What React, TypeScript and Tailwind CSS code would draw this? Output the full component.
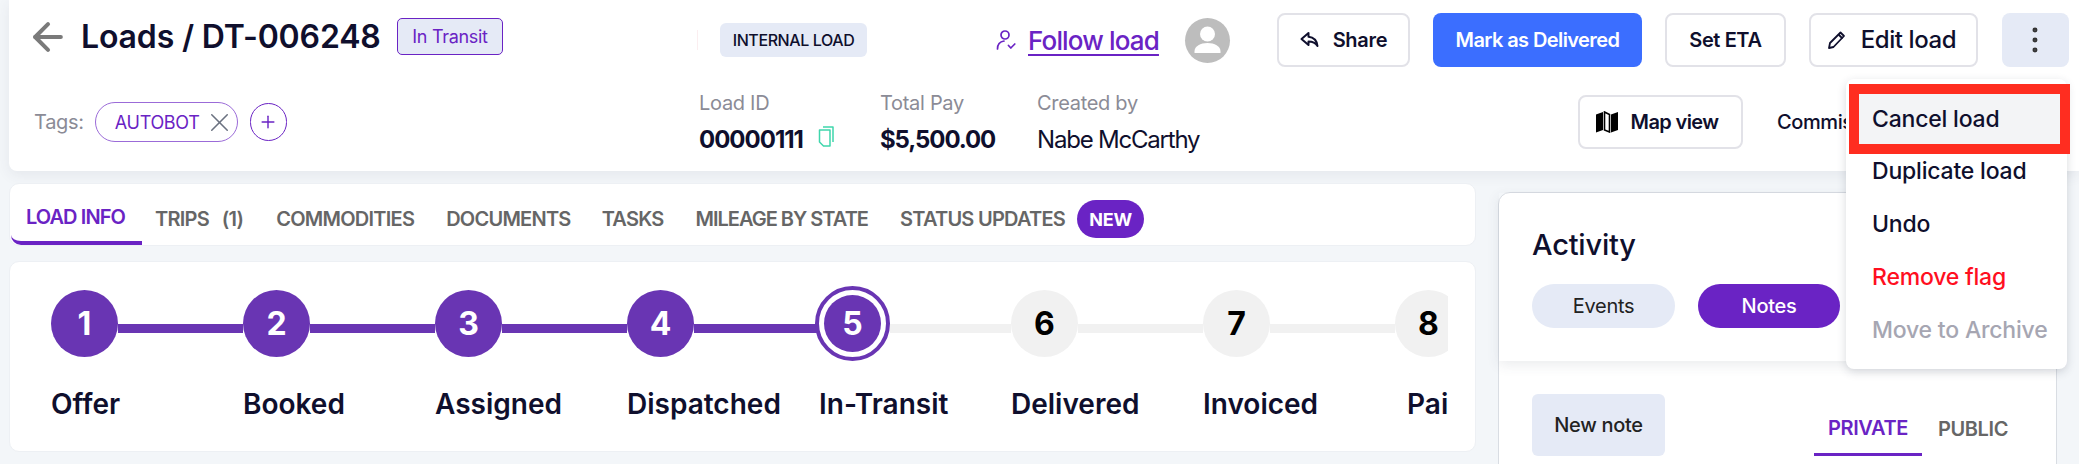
import React from "react";
import { ArrowLeft, X, Plus, EllipsisVertical } from "lucide-react";

function ReplyIcon() {
  return (
    <svg width="20" height="18" viewBox="0 0 20 18" fill="none" stroke="#0f0f2d" strokeWidth="2" strokeLinejoin="round" strokeLinecap="round">
      <path d="M8.500 2 1.500 8l7 6v-3.600c4 0 6.800 1 9 4.600-.6-5-3.400-8.600-9-9.200V2Z" />
    </svg>
  );
}

function PencilIcon() {
  return (
    <svg width="20" height="20" viewBox="0 0 20 20" fill="none" stroke="#0f0f2d" strokeWidth="1.800" strokeLinejoin="round">
      <path d="M2 18l1-5L13.500 2.500l3.500 3.500L6.500 17 2 18Z" />
      <path d="M11.500 4.500l4 4" />
    </svg>
  );
}

function MapIcon() {
  return (
    <svg width="24" height="22" viewBox="0 0 24 22" fill="#000">
      <path d="M1 3.500 8 1v18l-7 2.500V3.500Z" />
      <path d="M9.500 1l5 2.500v17.500l-5-2V1Z" fill="none" stroke="#000" strokeWidth="1.600" />
      <path d="M16 3.500 23 1v18l-7 2.500V3.500Z" />
    </svg>
  );
}

function FollowIcon() {
  return (
    <svg width="20" height="20" viewBox="0 0 20 20" fill="none" stroke="#6a23c4" strokeWidth="1.700" strokeLinecap="round" strokeLinejoin="round">
      <circle cx="9" cy="5" r="4" />
      <path d="M1.500 19c0-4.500 2.500-7.500 6.500-8" />
      <path d="M12.500 15.500l2.300 2.500 4-4" />
    </svg>
  );
}

function CopyIcon() {
  return (
    <svg width="16" height="21" viewBox="0 0 16 21" fill="none" stroke="#3fd6ac" strokeWidth="1.500" strokeLinejoin="round">
      <path d="M5 1h10v15" />
      <path d="M1.500 4H12v16H5.500l-4-4V4Z" />
    </svg>
  );
}

function Avatar() {
  return (
    <div className="w-[45px] h-[45px] rounded-full bg-[#bdbdbd] flex items-center justify-center overflow-hidden">
      <svg width="45" height="45" viewBox="0 0 45 45" fill="#fff">
        <circle cx="22.500" cy="16" r="7.500" />
        <path d="M9.500 33.500c0-5.500 6-8.500 13-8.500s13 3 13 8.500v1.500h-26v-1.500Z" />
      </svg>
    </div>
  );
}

function OutlineBtn({ className, children }: { className: string; children: React.ReactNode }) {
  return (
    <button className={`h-[54px] rounded-[8px] border-2 border-[#e2e2e8] bg-white flex items-center justify-center text-[#0f0f2d] ${className}`}>
      {children}
    </button>
  );
}

const tabs = [
  { t: "TRIPS\u00a0\u00a0\u00a0(1)", c: "ml-[13px] tracking-[-0.75px]" },
  { t: "COMMODITIES", c: "ml-[33px] tracking-[-0.75px]" },
  { t: "DOCUMENTS", c: "ml-[32px] tracking-[-0.75px]" },
  { t: "TASKS", c: "ml-[31px] tracking-[-0.75px]" },
  { t: "MILEAGE BY STATE", c: "ml-[32px] tracking-[-1px]" },
  { t: "STATUS UPDATES", c: "ml-[32px] tracking-[-0.75px]" },
];

const steps = ["Offer", "Booked", "Assigned", "Dispatched", "In-Transit", "Delivered", "Invoiced", "Paid"];

function Step({ n, label }: { n: number; label: string }) {
  const done = n < 5;
  const current = n === 5;
  return (
    <div className="w-[192px] shrink-0">
      <div className="flex items-center h-[67px]">
        {current ? (
          <div className="w-[75px] h-[75px] -ml-[4px] shrink-0 rounded-full border-[4px] border-[#6935b3] bg-white flex items-center justify-center">
            <div className="w-[57px] h-[57px] rounded-full bg-[#6935b3] text-white flex items-center justify-center text-[32px] font-bold">{n}</div>
          </div>
        ) : (
          <div className={`w-[67px] h-[67px] shrink-0 rounded-full flex items-center justify-center text-[32px] font-bold ${done ? "bg-[#6935b3] text-white" : "bg-[#f1f1f1] text-black"}`}>{n}</div>
        )}
        {n < 8 && <div className={`flex-1 h-[9px] mt-[10px] ${n < 5 ? "bg-[#6935b3]" : "bg-[#f1f1f1]"}`} />}
      </div>
      <div className={`mt-[30px] text-[28px] leading-[34px] font-semibold text-[#0f0f2d] whitespace-nowrap ${n === 8 ? "ml-[12px]" : ""}`}>{label}</div>
    </div>
  );
}

export default function App() {
  return (
    <div className="relative w-[2079px] h-[464px] overflow-hidden bg-[#f3f6f9] font-['Inter','Noto_Sans',sans-serif] text-[#0f0f2d]">
      <header className="ml-[9px] h-[171px] bg-white rounded-bl-[8px] shadow-[0_4px_14px_rgba(60,70,90,0.08)] flex flex-col">
        <div className="flex items-center h-[54px] mt-[13px] pl-[26px]">
          <div className="w-[662px] flex items-center shrink-0 -mt-[7px]">
            <ArrowLeft size={44} strokeWidth={2.200} className="text-[#7a7a7a] -ml-[9px]" />
            <h1 className="ml-[11px] w-[297px] text-[32px] font-semibold tracking-[-0.15px] whitespace-nowrap">Loads / DT-006248</h1>
            <span className="ml-[19px] h-[37px] w-[106px] rounded-[5px] border border-[#6a23c4] bg-[#e5eaf6] text-[#6a23c4] text-[18px] flex items-center justify-center whitespace-nowrap tracking-[-0.3px]">In Transit</span>
          </div>
          <div className="w-px h-[20px] bg-[#fbeef0]" />
          <span className="ml-[22px] h-[34px] w-[147px] rounded-[6px] bg-[#e5eaf6] text-[16px] font-medium flex items-center justify-center whitespace-nowrap tracking-[-0.4px]">INTERNAL LOAD</span>
          <span className="ml-[129px]"><FollowIcon /></span>
          <a className="ml-[12px] text-[26px] font-medium text-[#6a23c4] underline underline-offset-4 tracking-[-0.85px] whitespace-nowrap">Follow load</a>
          <div className="ml-[26px]"><Avatar /></div>
          <OutlineBtn className="ml-[47px] w-[133px] gap-[13px] text-[20px] font-semibold tracking-[-0.3px]"><ReplyIcon />Share</OutlineBtn>
          <button className="ml-[23px] h-[54px] w-[209px] rounded-[8px] bg-[#3b6eff] text-white text-[20px] font-semibold tracking-[-0.6px] whitespace-nowrap">Mark as Delivered</button>
          <OutlineBtn className="ml-[23px] w-[121px] text-[20px] font-semibold tracking-[-0.4px]">Set ETA</OutlineBtn>
          <OutlineBtn className="ml-[23px] w-[169px] gap-[14px] pr-[4px] text-[24px] font-medium tracking-[-0.4px]"><PencilIcon />Edit load</OutlineBtn>
          <button className="ml-[24px] h-[54px] w-[67px] rounded-[8px] bg-[#e5eaf6] flex items-center justify-center">
            <EllipsisVertical size={34} strokeWidth={1.500} className="text-[#333]" />
          </button>
        </div>
        <div className="flex items-center h-[54px] mt-[28px] pl-[25px]">
          <div className="w-[665px] shrink-0 flex items-center">
            <span className="text-[20px] text-[#8b8b96] tracking-[-0.3px]">Tags:</span>
            <span className="ml-[11px] h-[40px] w-[143px] rounded-full border border-[#9b6bd8] flex items-center pl-[19px] text-[18px] text-[#6a23c4] tracking-[-0.3px] whitespace-nowrap">
              AUTOBOT <X size={31} strokeWidth={1.200} className="text-[#6b7280] ml-[4px]" />
            </span>
            <span className="ml-[12px] w-[37px] h-[38px] rounded-full border border-[#6a23c4] flex items-center justify-center text-[#6a23c4]"><Plus size={20} strokeWidth={1.700} /></span>
          </div>
          <div className="w-[181px] shrink-0">
            <div className="mt-[1px] text-[20px] text-[#8b8b96] tracking-[-0.3px] leading-[26px]">Load ID</div>
            <div className="mt-[8px] flex items-center text-[24px] font-bold leading-[32px] tracking-[-1px]">00000111 <span className="ml-[15px] -mt-[6px]"><CopyIcon /></span></div>
          </div>
          <div className="w-[157px] shrink-0">
            <div className="mt-[1px] text-[20px] text-[#8b8b96] tracking-[-0.3px] leading-[26px]">Total Pay</div>
            <div className="mt-[8px] text-[24px] font-bold leading-[32px] tracking-[-1.100px]">$5,500.00</div>
          </div>
          <div className="w-[541px] shrink-0">
            <div className="mt-[1px] text-[20px] text-[#8b8b96] tracking-[-0.3px] leading-[26px]">Created by</div>
            <div className="mt-[8px] text-[24px] leading-[32px] tracking-[-1.2px]">Nabe McCarthy</div>
          </div>
          <OutlineBtn className="w-[165px] gap-[12px] pr-[8px] text-[20px] font-semibold tracking-[-0.6px]"><MapIcon />Map view</OutlineBtn>
          <span className="ml-[34px] text-[20px] font-medium whitespace-nowrap tracking-[-0.4px]">Commissions</span>
        </div>
      </header>

      <main className="flex ml-[9px] mt-[12px]">
        <div className="w-[1467px] shrink-0">
          <nav className="h-[63px] bg-white rounded-[10px] border border-[#edf0f4] flex items-center relative">
            <div className="h-full w-[131px] ml-[1px] pt-[9px] pr-[2px] flex items-center justify-center border-b-4 border-[#6a23c4] rounded-bl-[10px] text-[20px] font-semibold text-[#6a23c4] tracking-[-0.9px] whitespace-nowrap">LOAD INFO</div>
            {tabs.map((x) => (
              <span key={x.t} className={`${x.c} mt-[9px] text-[20px] font-semibold text-[#666] whitespace-nowrap`}>{x.t}</span>
            ))}
            <span className="ml-[12px] mt-[9px] w-[67px] h-[38px] rounded-full bg-[#6a23c4] text-white text-[18px] font-bold flex items-center justify-center tracking-[-0.3px]">NEW</span>
          </nav>
          <section className="mt-[15px] h-[191px] bg-white rounded-[10px] border border-[#edf0f4]">
            <div className="ml-[41px] w-[1397px] pt-[28px] overflow-hidden flex">
              {steps.map((s, i) => (
                <Step key={s} n={i + 1} label={s} />
              ))}
            </div>
          </section>
        </div>

        <aside className="ml-[22px] mt-[9px] w-[559px] h-[300px] shrink-0 bg-white rounded-t-[12px] border border-[#d9dde3]">
          <div className="h-[168px] pl-[33px] pt-[33px] shadow-[0_4px_12px_rgba(60,70,90,0.1)]">
            <h2 className="text-[29px] font-medium leading-[38px] tracking-[-0.2px]">Activity</h2>
            <div className="mt-[20px] flex gap-[23px]">
              <button className="w-[143px] h-[44px] rounded-full bg-[#e5eaf6] text-[20px] text-[#222] tracking-[-0.3px]">Events</button>
              <button className="w-[142px] h-[44px] rounded-full bg-[#6a23c4] text-white text-[20px] font-medium tracking-[-0.3px]">Notes</button>
            </div>
          </div>
          <div className="pl-[33px] pt-[33px] flex items-end">
            <button className="w-[133px] h-[62px] rounded-[6px] bg-[#e5eaf6] text-[20px] font-medium text-[#222] tracking-[-0.3px]">New note</button>
            <div className="ml-[149px] h-[62px] w-[108px] border-b-[3px] border-[#6a23c4] flex items-center justify-center text-[20px] font-semibold text-[#6a23c4] tracking-[-0.4px] pt-[8px]">PRIVATE</div>
            <div className="ml-[16px] h-[62px] flex items-center text-[20px] font-semibold text-[#666] tracking-[-0.4px] pt-[8px]">PUBLIC</div>
          </div>
        </aside>
      </main>

      <div className="absolute left-[1846px] top-[79px] w-[221px] h-[290px] bg-white rounded-[8px] shadow-[0_3px_10px_rgba(40,50,70,0.18)] pt-[15px] text-[23px] font-medium">
        <div className="h-[50px] ml-[12px] w-[202px] bg-[#f3f4f6] flex items-center pl-[14px] tracking-[-0.2px]">Cancel load</div>
        <div className="absolute left-[3px] top-[5px] w-[221px] h-[70px] border-[10px] border-[#ff2d20]" />
        <div className="pl-[26px] mt-[1px]">
          <div className="h-[53px] flex items-center tracking-[-0.2px]">Duplicate load</div>
          <div className="h-[53px] flex items-center tracking-[-0.2px]">Undo</div>
          <div className="h-[53px] flex items-center text-[#ff0f1f] tracking-[-0.2px]">Remove flag</div>
          <div className="h-[53px] flex items-center text-[#a6a6b2] tracking-[-0.2px]">Move to Archive</div>
        </div>
      </div>
    </div>
  );
}
